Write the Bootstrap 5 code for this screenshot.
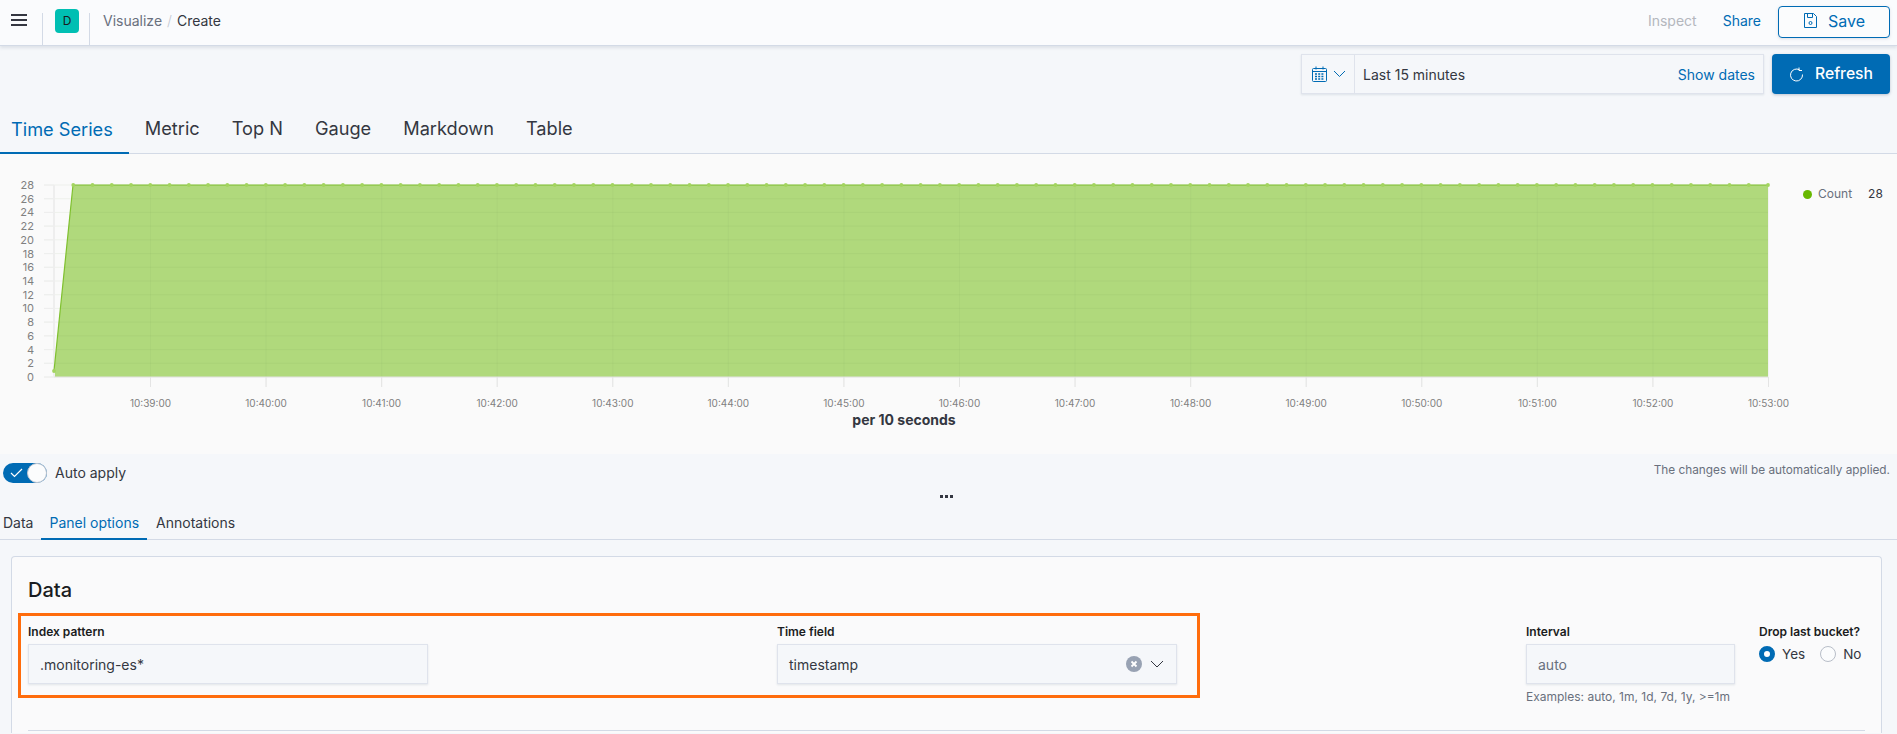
<!DOCTYPE html>
<html lang="en">
<head>
<meta charset="utf-8">
<title>Visualize - Create</title>
<link href="https://cdn.jsdelivr.net/npm/bootstrap@5.3.0/dist/css/bootstrap.min.css" rel="stylesheet">
<style>
html,body{height:734px;overflow:hidden}
body{font-family:Inter,"Liberation Sans",sans-serif;background:#f5f7fa;color:#343741;font-size:14px}
.topbar{height:46px;background:#fafbfd;border-bottom:1px solid #d3dae6;box-shadow:0 2px 3px rgba(152,162,179,.25);position:relative;padding-bottom:5px}
.burger{width:42px;padding-left:11px}
.logo-cell{width:48px;height:32px;margin-top:13px;border-left:1px solid #d3dae6;border-right:1px solid #d3dae6;align-self:flex-start}
.logo-tile{width:24px;height:24px;background:#00bfb3;border-radius:4px;color:#1a1c21;font-size:12px;margin:-4px 0 0 12px}
.crumbs{margin-left:13px;font-size:14px;color:#69707d}
.crumbs .sep{color:#c2c8d2;margin:0 5px;font-weight:300}
.crumbs .now{color:#343741}
.top-link{font-size:14px;color:#006bb4;margin-right:26px}
.top-link.off{color:#b4b7bd}
.save-btn{width:112px;height:32px;margin:4px 7px 0 -9px;border:1px solid #006bb4;border-radius:4px;color:#006bb4;font-size:16px;background:#fbfcfd;box-shadow:0 1px 3px rgba(152,162,179,.3);gap:10px;padding-bottom:3px}
.time-row{height:48px;padding:8px 7px 0 0;gap:8px}
.picker{width:463px;height:40px;background:#f5f7fa;border:1px solid #dfe3ec;box-shadow:0 1px 2px rgba(152,162,179,.25);font-size:14px}
.picker-quick{width:53px;border-right:1px solid #dfe3ec;gap:6px;padding-left:10px}
.picker-text{padding:0 8px 0 8px;flex:1}
.dates-link{color:#006bb4}
.refresh-btn{width:118px;height:40px;background:#006bb4;border-radius:4px;color:#fff;font-size:15.700px;font-weight:500;gap:11px;box-shadow:0 1px 3px rgba(60,80,110,.3)}
.viz-tabs{height:60px;align-items:flex-end;border-bottom:1px solid #d3dae6;margin:0}
.viz-tab{padding:0 16px 14px;font-size:18.200px;line-height:21px;color:#343741;height:44px;display:flex;align-items:flex-end}
.viz-tab.first{padding-left:11px;color:#006bb4;border-bottom:2px solid #006bb4;padding-bottom:12px;margin-bottom:-1px}
.chart-box{height:300px;background:#fafafa;position:relative}
.chart-box svg{display:block}
.legend-row{position:absolute;left:1803px;top:31px;font-size:12px;color:#69707d;gap:6px}
.legend-dot{width:9px;height:9px;background:#68b800;border-radius:50%}
.legend-val{color:#343741;margin-left:10px}
.apply-row{height:36px;padding:8px 7px 0 3px;color:#343741}
.fake-switch{width:44px;height:20px;background:#006bb4;border-radius:10px;position:relative}
.fake-switch svg{margin:4px 0 0 7px;display:block}
.fake-knob{position:absolute;right:0;top:0;width:20px;height:20px;border-radius:50%;background:#fbfcfd;border:1px solid #bfc5d0}
.apply-label{margin-left:8px;font-size:14px}
.apply-note{font-size:11.800px;color:#69707d}
.grip{height:14px;gap:2px;padding-right:4px;padding-bottom:2px}
.grip i{width:3px;height:3px;background:#343741;display:block}
.panel-tabs{height:36px;border-bottom:1px solid #d3dae6;padding-left:3px;align-items:flex-end}
.panel-tab{font-size:14px;color:#343741;padding:0 8px 8px;line-height:17px}
.panel-tab.first{padding-left:0;padding-right:8px}
.panel-tab.on{color:#006bb4;border-bottom:2px solid #006bb4;margin-bottom:-1px;padding-bottom:7px;margin-right:1px}
.edit-card{margin:16px 15px 0 11px;border:1px solid #d3dae6;border-bottom:0;border-radius:4px 4px 0 0;background:#fafafb;padding:16px 16px 0;position:relative;height:177px;overflow:hidden}
.edit-title{font-size:20px;font-weight:500;color:#1a1c21;line-height:34px;margin:0 0 17px}
.form-line{gap:24px}
.col-wide{flex:1 1 0}
.col-int{width:209px}
.col-drop{width:106px}
.f-label{font-size:12px;font-weight:600;color:#1a1c21;line-height:15px;margin-bottom:5px;white-space:nowrap}
.f-input{height:40px;background:#f5f7fa;border:1px solid #dfe3ec;box-shadow:0 1px 2px rgba(152,162,179,.25);padding:0 12px 0 11px;font-size:14px;color:#343741;max-width:400px}
.f-input.muted{color:#69707d}
.f-help{font-size:12px;color:#69707d;margin-top:5px;line-height:15px;white-space:nowrap}
.radio-line{font-size:13.500px;color:#343741;margin-top:5px;gap:7px}
.radio-on{width:16px;height:16px;flex:none;border-radius:50%;border:5px solid #006bb4;background:#fff}
.radio-off{width:16px;height:16px;flex:none;border-radius:50%;border:1px solid #b8bec8;background:#fbfcfd;margin-left:8px}
.clear-dot{width:16px;height:16px;border-radius:50%;background:#98a2b3;margin-right:8px}
.orange-box{position:absolute;left:6px;top:56px;width:1182px;height:85px;border:3px solid #ff6c0c;pointer-events:none}
.card-rule{border-top:1px solid #d3dae6;margin-top:26px}
</style>
</head>
<body>
<header class="topbar d-flex align-items-center">
  <div class="burger d-flex align-items-center">
    <svg width="16" height="12" viewBox="0 0 16 12"><path d="M0 1h16M0 6h16M0 11h16" stroke="#343741" stroke-width="2"/></svg>
  </div>
  <div class="logo-cell"><div class="logo-tile d-flex align-items-center justify-content-center">D</div></div>
  <div class="crumbs"><span>Visualize</span><span class="sep">/</span><span class="now">Create</span></div>
  <div class="ms-auto d-flex align-items-center">
    <span class="top-link off">Inspect</span>
    <span class="top-link">Share</span>
    <div class="save-btn d-flex align-items-center justify-content-center">
      <svg width="15" height="15" viewBox="0 0 15 15" fill="none" stroke="#006bb4"><path d="M1.500.5h9l3 3v11h-12z"/><path d="M4.500.5v4h5v-4"/><circle cx="7.500" cy="10" r="1.500"/></svg>
      <span>Save</span>
    </div>
  </div>
</header>

<div class="time-row d-flex justify-content-end">
  <div class="picker d-flex align-items-stretch">
    <div class="picker-quick d-flex align-items-center">
      <svg width="15" height="16" viewBox="0 0 15 16" fill="none" stroke="#006bb4"><rect x=".5" y="2.500" width="14" height="13" rx="1"/><path d="M.5 5.500h14M4 .5v3M11 .5v3" /><path d="M3 8h9M3 10.500h9M3 13h9" stroke-dasharray="2 1.200" stroke-width="1.400"/></svg>
      <svg width="13" height="8" viewBox="0 0 13 8" fill="none" stroke="#006bb4"><path d="M1 1l5.500 5.500L12 1"/></svg>
    </div>
    <div class="picker-text d-flex align-items-center justify-content-between">
      <span>Last 15 minutes</span><span class="dates-link">Show dates</span>
    </div>
  </div>
  <div class="refresh-btn d-flex align-items-center justify-content-center">
    <svg width="15" height="15" viewBox="0 0 15 15" fill="none" stroke="#fff"><path d="M10.500 2.800A6 6 0 1 0 13.500 7.500"/><path d="M10 .5v3h3"/></svg>
    <span>Refresh</span>
  </div>
</div>

<nav class="viz-tabs d-flex">
  <div class="viz-tab first">Time Series</div>
  <div class="viz-tab">Metric</div>
  <div class="viz-tab">Top N</div>
  <div class="viz-tab">Gauge</div>
  <div class="viz-tab">Markdown</div>
  <div class="viz-tab">Table</div>
</nav>

<section class="chart-box">
  <svg id="chart" width="1897" height="300" viewBox="0 154 1897 300" font-family="Inter, 'Liberation Sans', sans-serif"></svg>
  <div class="legend-row d-flex align-items-center">
    <span class="legend-dot"></span><span>Count</span><span class="legend-val">28</span>
  </div>
</section>

<div class="apply-row d-flex align-items-start justify-content-between">
  <div class="d-flex align-items-center">
    <div class="fake-switch">
      <svg width="13" height="11" viewBox="0 0 13 11" fill="none" stroke="#fff" stroke-width="1.200"><path d="M1 6l3.500 3.500L12 2"/></svg>
      <span class="fake-knob"></span>
    </div>
    <span class="apply-label">Auto apply</span>
  </div>
  <span class="apply-note">The changes will be automatically applied.</span>
</div>
<div class="grip d-flex align-items-center justify-content-center"><i></i><i></i><i></i></div>

<nav class="panel-tabs d-flex">
  <div class="panel-tab first">Data</div>
  <div class="panel-tab on">Panel options</div>
  <div class="panel-tab">Annotations</div>
</nav>

<section class="edit-card">
  <h2 class="edit-title">Data</h2>
  <div class="orange-box"></div>
  <div class="form-line d-flex">
    <div class="col-wide">
      <div class="f-label">Index pattern</div>
      <div class="f-input d-flex align-items-center">.monitoring-es*</div>
    </div>
    <div class="col-wide">
      <div class="f-label">Time field</div>
      <div class="f-input d-flex align-items-center">
        <span>timestamp</span>
        <span class="clear-dot ms-auto d-flex align-items-center justify-content-center"><svg width="8" height="8" viewBox="0 0 8 8"><path d="M1.500 1.500l5 5M6.500 1.500l-5 5" stroke="#fff" stroke-width="1.800"/></svg></span>
        <svg width="14" height="8" viewBox="0 0 14 8" fill="none" stroke="#343741"><path d="M1 1l6 6 6-6"/></svg>
      </div>
    </div>
    <div class="col-int">
      <div class="f-label">Interval</div>
      <div class="f-input muted d-flex align-items-center">auto</div>
      <div class="f-help">Examples: auto, 1m, 1d, 7d, 1y, &gt;=1m</div>
    </div>
    <div class="col-drop">
      <div class="f-label">Drop last bucket?</div>
      <div class="radio-line d-flex align-items-center">
        <span class="radio-on"></span><span>Yes</span>
        <span class="radio-off"></span><span>No</span>
      </div>
    </div>
  </div>
  <div class="card-rule"></div>
</section>

<script src="https://cdn.jsdelivr.net/npm/bootstrap@5.3.0/dist/js/bootstrap.bundle.min.js"></script>
<script>
(function(){
  var L=54,R=1768,T=185,B=377,s='';
  var step=(B-T)/14;
  s+='<path d="M'+L+' 371L73 '+T+'H'+R+'V'+B+'H'+L+'Z" fill="#b0d97c"/>';
  for(var i=0;i<=14;i++){
    var y=B-i*step;
    s+='<line x1="44" x2="'+R+'" y1="'+y+'" y2="'+y+'" stroke="#6a8a50" stroke-opacity=".08"/>';
    s+='<line x1="44" x2="'+L+'" y1="'+y+'" y2="'+y+'" stroke="#eee"/>';
    s+='<text x="34" y="'+(y+4)+'" font-size="11" fill="#808080" text-anchor="end">'+(i*2)+'</text>';
  }
  s+='<line x1="54" x2="54" y1="'+T+'" y2="'+B+'" stroke="#eeeeee" stroke-width="2"/>';
  for(var m=0;m<=14;m++){
    var x=150.5+m*(1618/14),label='10:'+(39+m)+':00';
    s+='<line x1="'+x+'" x2="'+x+'" y1="'+T+'" y2="387" stroke="#6a8a50" stroke-opacity=".06"/>';
    s+='<line x1="'+x+'" x2="'+x+'" y1="'+B+'" y2="387" stroke="#e4e4e4"/>';
    s+='<text x="'+x+'" y="407" font-size="10" fill="#808080" text-anchor="middle">'+label+'</text>';
  }
  s+='<line x1="'+L+'" x2="'+R+'" y1="'+B+'" y2="'+B+'" stroke="#e4e4e4"/>';
  s+='<path d="M'+L+' 371L73 '+T+'H'+R+'" fill="none" stroke="#7fc02e" stroke-width="1.200"/>';
  var pts=90,dx=(R-L)/(pts-1);
  for(var p=0;p<pts;p++){
    s+='<circle cx="'+(L+p*dx)+'" cy="'+(p===0?371:T)+'" r="1.900" fill="#a3d45f"/>';
  }
  s+='<text x="904" y="425" font-size="14" font-weight="700" fill="#343741" text-anchor="middle">per 10 seconds</text>';
  document.getElementById('chart').innerHTML=s;
})();
</script>
</body>
</html>
